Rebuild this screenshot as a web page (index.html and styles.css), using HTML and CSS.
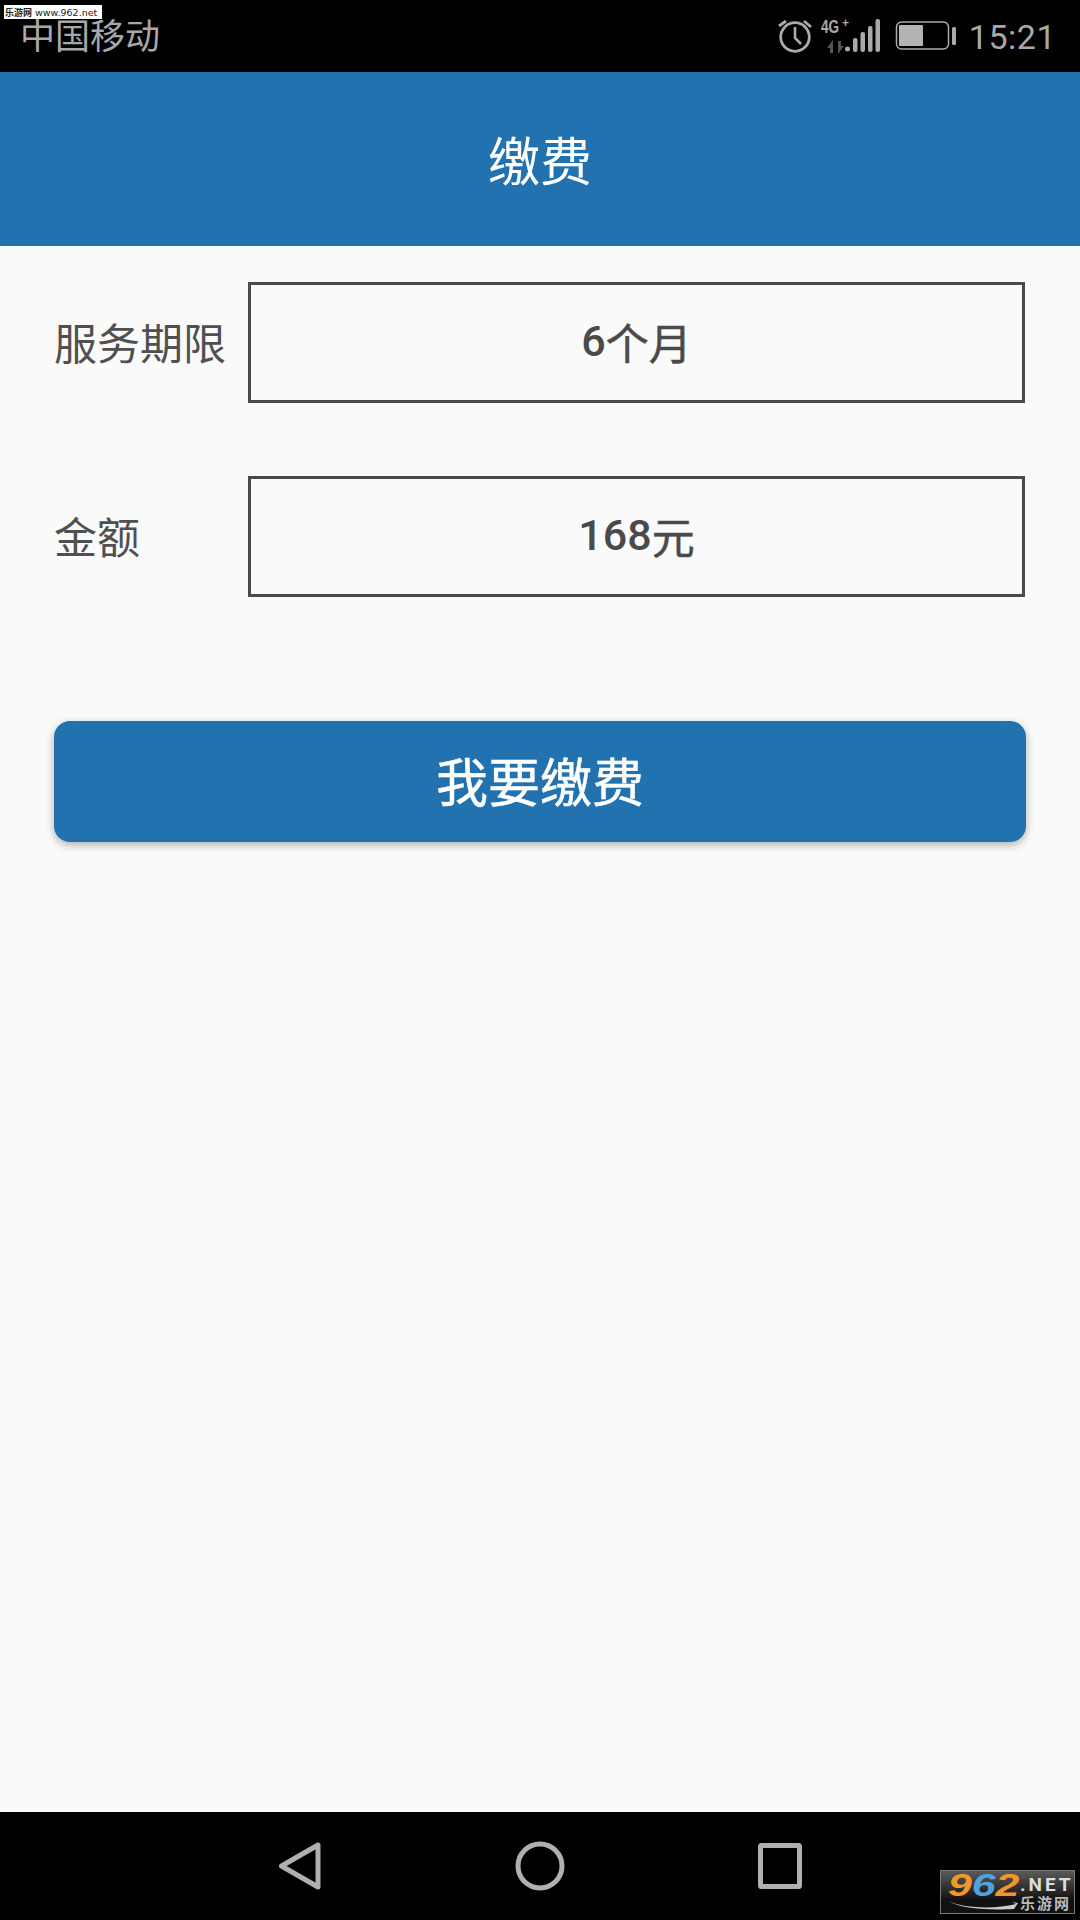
FILE: index.html
```html
<!DOCTYPE html>
<html lang="zh-CN">
<head>
  <meta charset="UTF-8" />
  <meta name="viewport" content="width=device-width, initial-scale=1.0"/>
  <title>缴费</title>
  <link rel="stylesheet" href="styles.css">
</head>
<body>

<div class="status-bar">
  <span class="carrier">中国移动</span>
  <svg class="status-icons" width="185" height="72" viewBox="775 0 185 72" fill="none">
    <!-- alarm -->
    <circle cx="795" cy="37" r="14.3" stroke="#aaa" stroke-width="2.8"/>
    <path d="M795 27v11l6 6" stroke="#aaa" stroke-width="2.6"/>
    <path d="M779 26l7 -5M804 21l7 6" stroke="#aaa" stroke-width="2.8"/>
    <!-- signal -->
    <text class="net-type" x="821" y="33" textLength="18" lengthAdjust="spacingAndGlyphs">4G</text>
    <text class="net-plus" x="842" y="27">+</text>
    <path d="M827 48L833 40V53H830V48Z" fill="#555"/>
    <path d="M844 46L838 54V41H841V46Z" fill="#555"/>
    <circle cx="847.5" cy="49" r="2.5" fill="#aaa"/>
    <rect x="853" y="38" width="4.5" height="14" rx="2" fill="#aaa"/>
    <rect x="860.5" y="32" width="4.5" height="20" rx="2" fill="#aaa"/>
    <rect x="868" y="26" width="4.5" height="26" rx="2" fill="#aaa"/>
    <rect x="875.5" y="19" width="4.5" height="33" rx="2" fill="#aaa"/>
    <!-- battery -->
    <rect x="896.5" y="22" width="52" height="27" rx="5" stroke="#aaa" stroke-width="1.5"/>
    <rect x="899" y="25" width="24" height="21" rx="1" fill="#b4b4b4"/>
    <rect x="952" y="27" width="4" height="18" rx="1.5" fill="#aaa"/>
  </svg>
  <span class="clock">15:21</span>
</div>

<header>
  <h1>缴费</h1>
</header>

<main>
  <div class="form-row">
    <label>服务期限</label>
    <div class="value-box"><b>6</b>个月</div>
  </div>
  <div class="form-row">
    <label>金额</label>
    <div class="value-box"><b>168</b>元</div>
  </div>
  <button type="button" class="pay-btn">我要缴费</button>
</main>

<nav class="nav-bar">
  <svg width="52" height="60" viewBox="0 0 52 60" fill="none" stroke="#b0b0b0" stroke-width="5" stroke-linejoin="round">
    <path d="M9.5 30L46 9V51Z"/>
  </svg>
  <svg width="60" height="60" viewBox="0 0 60 60" fill="none" stroke="#b0b0b0" stroke-width="5">
    <circle cx="30" cy="30" r="22"/>
  </svg>
  <svg width="48" height="60" viewBox="0 0 48 60" fill="none" stroke="#b0b0b0" stroke-width="5" stroke-linejoin="round">
    <rect x="4.5" y="9.5" width="39" height="41" rx="1"/>
  </svg>
</nav>

<!-- site watermarks on top of the screenshot -->
<div class="mark-top"><span class="mark-cn">乐游网</span> www.962.net</div>
<div class="mark-logo">
  <div class="logo-left">
    <span class="logo-num"><b class="orange">9</b><b class="blue">6</b><b class="orange">2</b></span>
    <svg class="logo-swoosh" width="70" height="10" viewBox="0 0 70 10">
      <path d="M0 1C18 9 48 9 68 4L64 2L70 3L66 9C46 10 16 10 0 1Z" fill="#ccc"/>
    </svg>
  </div>
  <div class="logo-side">
    <span class="logo-net">.NET</span>
    <span class="logo-cn">乐游网</span>
  </div>
</div>

</body>
</html>
```

FILE: styles.css
```css
* { box-sizing: border-box; margin: 0; padding: 0; }

body {
  position: relative;
  width: 1080px;
  height: 1920px;
  display: flex;
  flex-direction: column;
  font-family: Roboto, 'Noto Sans CJK SC', sans-serif;
  background: #fafafa;
  color: #4a4a4a;
  overflow: hidden;
}

.status-bar {
  height: 72px;
  display: flex;
  align-items: center;
  padding: 0 24px 0 20px;
  background: #000;
  color: #a8a8a8;
}

.carrier {
  font-size: 35px;
  line-height: 72px;
  flex: 1;
  padding-top: 3px;
}

.status-icons {
  margin-right: 9px;
}

.net-type {
  font-family: 'Liberation Sans', sans-serif;
  font-size: 18px;
  font-weight: 700;
  fill: #aaa;
}

.net-plus {
  font-family: 'Liberation Sans', sans-serif;
  font-size: 12px;
  font-weight: 700;
  fill: #aaa;
}

.clock {
  font-size: 34px;
  letter-spacing: 0.5px;
  padding-top: 2px;
}

header {
  height: 174px;
  display: flex;
  align-items: center;
  justify-content: center;
  padding-bottom: 2px;
  background: #2272b0;
  color: #fff;
}

header h1 {
  font-size: 52px;
  font-weight: 400;
}

main {
  flex: 1;
  padding: 36px 54px 0;
}

.form-row {
  display: flex;
  align-items: center;
  margin-bottom: 73px;
}

.form-row label {
  width: 194px;
  font-size: 43px;
  padding-bottom: 4px;
  color: #505050;
}

.value-box {
  flex: 1;
  height: 121px;
  margin-right: 1px;
  display: flex;
  align-items: center;
  justify-content: center;
  padding-bottom: 4px;
  border: 3px solid #4a4a4a;
  font-size: 43px;
  -webkit-text-stroke: 0.5px #4a4a4a;
}

.value-box b {
  font-weight: 500;
  -webkit-text-stroke: 0;
}

.pay-btn {
  display: block;
  width: 100%;
  height: 121px;
  margin-top: 124px;
  padding-bottom: 5px;
  border: none;
  border-radius: 16px;
  background: #2272b0;
  color: #fff;
  font-family: inherit;
  font-size: 52px;
  -webkit-text-stroke: 0.5px #fff;
  box-shadow: 0 3px 8px rgba(0, 0, 0, 0.3);
}

.nav-bar {
  height: 108px;
  display: flex;
  align-items: center;
  gap: 186px;
  padding-left: 272px;
  background: #000;
}

.mark-top {
  position: absolute;
  left: 4px;
  top: 5px;
  width: 98px;
  height: 14px;
  padding-left: 1px;
  background: #fff;
  color: #222;
  font-family: 'DejaVu Sans', 'Noto Sans CJK SC', sans-serif;
  font-size: 9.5px;
  line-height: 15px;
  white-space: nowrap;
}

.mark-cn {
  font-size: 9px;
  font-weight: 700;
}

.mark-logo {
  position: absolute;
  left: 940px;
  top: 1870px;
  width: 135px;
  height: 44px;
  display: flex;
  padding: 2px 0 0 7px;
  border: 1px solid #777;
  background: linear-gradient(#5a5a5a, #111 70%);
}

.logo-left {
  width: 72px;
  display: flex;
  flex-direction: column;
}

.logo-num {
  display: block;
  height: 26px;
  font-family: 'Liberation Sans', sans-serif;
  font-size: 31px;
  font-style: italic;
  line-height: 26px;
  transform: scaleX(1.38);
  transform-origin: left center;
}

.logo-swoosh {
  margin-top: 1px;
}

.orange { color: #f0962a; }
.blue { color: #4fa3dc; }

.logo-side {
  display: flex;
  flex-direction: column;
  align-items: flex-start;
}

.logo-net {
  font-size: 19px;
  font-weight: 700;
  letter-spacing: 3px;
  line-height: 22px;
  margin-top: 1px;
  color: #ddd;
}

.logo-cn {
  font-size: 15px;
  font-weight: 700;
  line-height: 16px;
  letter-spacing: 2px;
  color: #bbb;
}
```
